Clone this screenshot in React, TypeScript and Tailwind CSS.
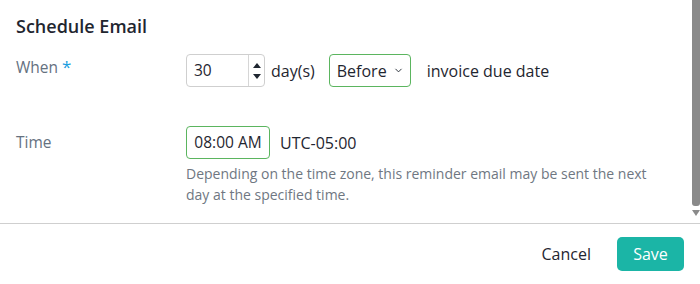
import { ChevronDown } from "lucide-react";

export default function App() {
  return (
    <div className="w-[700px] h-[284px] bg-white flex flex-col text-[#2d3440] font-['Open_Sans',sans-serif] overflow-hidden">
      <div className="h-[224px] flex border-b border-[#cfcfcf]">
        <div className="flex-1 pl-4 pt-[14px]">
          <h2 className="text-[18px] leading-6 font-semibold text-[#1f2630]">Schedule Email</h2>

          <div className="mt-[16px] flex items-center h-[33px]">
            <div className="w-[170px] text-[15.5px] text-[#65717f] self-start pt-[2px]">
              When <span className="text-[#1a9ee0] text-[17px] align-top relative -top-[2px]">*</span>
            </div>
            <div className="w-[79px] h-[33px] border border-[#cfcfcf] rounded-[4px] flex">
              <div className="flex-1 flex items-center pl-[7px] text-[15.5px] text-[#1f2630]">30</div>
              <div className="w-[16px] border-l border-[#d6d6d6] flex flex-col items-center justify-center gap-[6px]">
                <svg width="8" height="5" viewBox="0 0 8 5"><path d="M4 0 L8 5 L0 5 Z" fill="#1f2630" /></svg>
                <svg width="8" height="5" viewBox="0 0 8 5"><path d="M0 0 L8 0 L4 5 Z" fill="#1f2630" /></svg>
              </div>
            </div>
            <span className="ml-[6px] text-[16px] text-[#1f2630]">day(s)</span>
            <div className="ml-[14px] w-[82px] h-[33px] border border-[#5bb55f] rounded-[4px] flex items-center pl-[7px] gap-[6px] text-[16px] text-[#1f2630]">
              Before
              <ChevronDown size={11} strokeWidth={2} color="#1f2630" />
            </div>
            <span className="ml-[16px] text-[16px] text-[#1f2630]">invoice due date</span>
          </div>

          <div className="mt-[39px] flex">
            <div className="w-[170px] h-[33px] flex items-center text-[15.5px] text-[#65717f]">Time</div>
            <div className="flex flex-col">
              <div className="flex items-center">
                <div className="w-[84px] h-[33px] border border-[#5bb55f] rounded-[4px] flex items-center justify-center text-[15.5px] text-[#1f2630]">08:00 AM</div>
                <span className="ml-[10px] text-[16px] text-[#1f2630]">UTC-05:00</span>
              </div>
              <p className="mt-[4px] w-[480px] text-[14px] leading-[21px] text-[#6f7782]">
                Depending on the time zone, this reminder email may be sent the next day at the specified time.
              </p>
            </div>
          </div>
        </div>

        <div className="w-[8px] flex flex-col items-center">
          <div className="w-[8px] h-[206px] bg-[#8a8a8a] rounded-b-[3px]" />
          <svg className="mt-[4px]" width="8" height="6" viewBox="0 0 8 6"><path d="M0 0 L8 0 L4 6 Z" fill="#8a8a8a" /></svg>
        </div>
      </div>

      <div className="flex-1 flex items-center justify-end pr-4 gap-[26px]">
        <button className="text-[16px] text-[#1f2630]">Cancel</button>
        <button className="h-[34px] w-[67px] rounded-[5px] bg-[#1bb5a6] text-white text-[16px]">Save</button>
      </div>
    </div>
  );
}
